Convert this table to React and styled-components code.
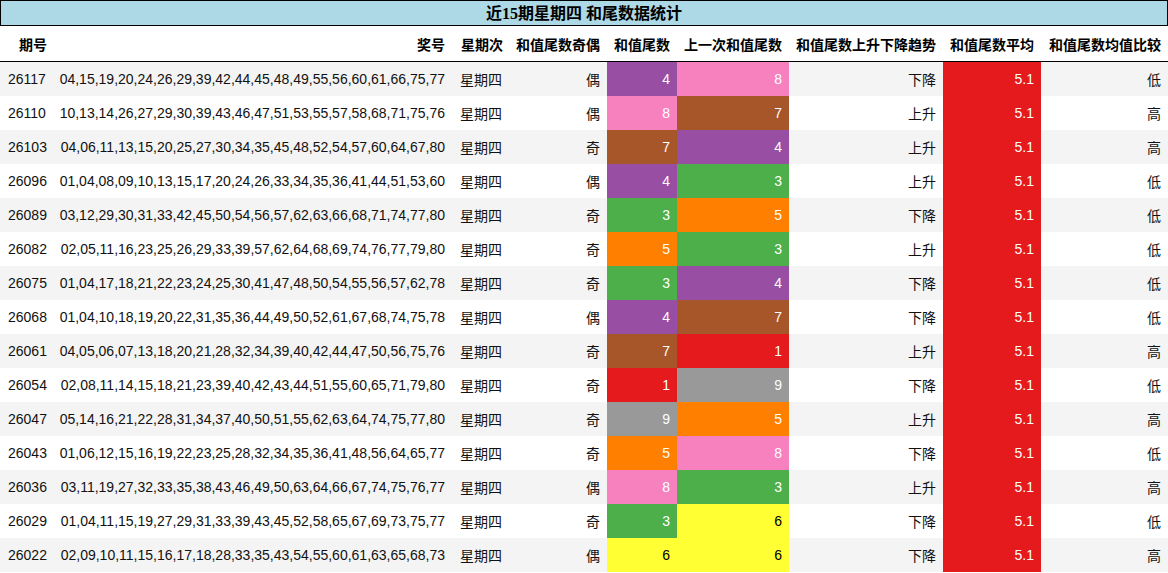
import React from "react";
import styled, { createGlobalStyle } from "styled-components";

const GlobalStyle = createGlobalStyle`
  body {
    margin: 0;
    background: #ffffff;
    font-family: "Liberation Sans", "Noto Sans CJK SC", sans-serif;
  }
`;

const colors = {
  1: "#e41a1c",
  3: "#4daf4a",
  4: "#984ea3",
  5: "#ff7f00",
  6: "#ffff33",
  7: "#a65628",
  8: "#f781bf",
  9: "#999999",
};

const rows = [
  ["26117", "04,15,19,20,24,26,29,39,42,44,45,48,49,55,56,60,61,66,75,77", "偶", 4, 8, "下降", "低"],
  ["26110", "10,13,14,26,27,29,30,39,43,46,47,51,53,55,57,58,68,71,75,76", "偶", 8, 7, "上升", "高"],
  ["26103", "04,06,11,13,15,20,25,27,30,34,35,45,48,52,54,57,60,64,67,80", "奇", 7, 4, "上升", "高"],
  ["26096", "01,04,08,09,10,13,15,17,20,24,26,33,34,35,36,41,44,51,53,60", "偶", 4, 3, "上升", "低"],
  ["26089", "03,12,29,30,31,33,42,45,50,54,56,57,62,63,66,68,71,74,77,80", "奇", 3, 5, "下降", "低"],
  ["26082", "02,05,11,16,23,25,26,29,33,39,57,62,64,68,69,74,76,77,79,80", "奇", 5, 3, "上升", "低"],
  ["26075", "01,04,17,18,21,22,23,24,25,30,41,47,48,50,54,55,56,57,62,78", "奇", 3, 4, "下降", "低"],
  ["26068", "01,04,10,18,19,20,22,31,35,36,44,49,50,52,61,67,68,74,75,78", "偶", 4, 7, "下降", "低"],
  ["26061", "04,05,06,07,13,18,20,21,28,32,34,39,40,42,44,47,50,56,75,76", "奇", 7, 1, "上升", "高"],
  ["26054", "02,08,11,14,15,18,21,23,39,40,42,43,44,51,55,60,65,71,79,80", "奇", 1, 9, "下降", "低"],
  ["26047", "05,14,16,21,22,28,31,34,37,40,50,51,55,62,63,64,74,75,77,80", "奇", 9, 5, "上升", "高"],
  ["26043", "01,06,12,15,16,19,22,23,25,28,32,34,35,36,41,48,56,64,65,77", "奇", 5, 8, "下降", "低"],
  ["26036", "03,11,19,27,32,33,35,38,43,46,49,50,63,64,66,67,74,75,76,77", "偶", 8, 3, "上升", "高"],
  ["26029", "01,04,11,15,19,27,29,31,33,39,43,45,52,58,65,67,69,73,75,77", "奇", 3, 6, "下降", "低"],
  ["26022", "02,09,10,11,15,16,17,18,28,33,35,43,54,55,60,61,63,65,68,73", "偶", 6, 6, "下降", "高"],
];

const headers = [
  "期号",
  "奖号",
  "星期次",
  "和值尾数奇偶",
  "和值尾数",
  "上一次和值尾数",
  "和值尾数上升下降趋势",
  "和值尾数平均",
  "和值尾数均值比较",
];

const widths = [54, 398, 58, 97, 70, 112, 154, 98, 127];

const Page = styled.div`
  width: 1168px;
`;

const Title = styled.div`
  height: 24px;
  border: 1px solid #000;
  background: #add8e6;
  font-family: "Liberation Serif", "Noto Sans CJK SC", serif;
  font-weight: bold;
  font-size: 16px;
  line-height: 25px;
  text-align: center;
  color: #000;
`;

const Table = styled.table`
  width: 1168px;
  table-layout: fixed;
  border-collapse: collapse;
  border-spacing: 0;
  font-size: 14px;
  color: #111;
`;

const HeadCell = styled.th`
  height: 35px;
  padding: 0 7px 0 0;
  text-align: right;
  font-weight: bold;
  font-size: 14px;
  color: #000;
  border-bottom: 1px solid #000;
  white-space: nowrap;
`;

const Row = styled.tr`
  height: 34px;
  background: ${(p) => (p.$shaded ? "#f4f4f4" : "#ffffff")};
`;

const Cell = styled.td`
  padding: ${(p) => (p.$left ? "0 0 0 8px" : "0 7px 0 0")};
  text-align: ${(p) => (p.$left ? "left" : "right")};
  white-space: nowrap;
  vertical-align: middle;
`;

const ColorCell = styled(Cell)`
  background: ${(p) => p.$bg};
  color: ${(p) => (p.$dark ? "#000" : "#fff")};
`;

const digitCell = (n) => (
  <ColorCell $bg={colors[n]} $dark={n === 6}>
    {n}
  </ColorCell>
);

export default function App() {
  return (
    <Page>
      <GlobalStyle />
      <Title>近15期星期四 和尾数据统计</Title>
      <Table>
        <colgroup>
          {widths.map((w, i) => (
            <col key={i} style={{ width: w }} />
          ))}
        </colgroup>
        <thead>
          <tr>
            {headers.map((h) => (
              <HeadCell key={h}>{h}</HeadCell>
            ))}
          </tr>
        </thead>
        <tbody>
          {rows.map((r, i) => (
            <Row key={r[0]} $shaded={i % 2 === 0}>
              <Cell $left>{r[0]}</Cell>
              <Cell>{r[1]}</Cell>
              <Cell $left>星期四</Cell>
              <Cell>{r[2]}</Cell>
              {digitCell(r[3])}
              {digitCell(r[4])}
              <Cell>{r[5]}</Cell>
              <ColorCell $bg="#e41a1c">5.1</ColorCell>
              <Cell>{r[6]}</Cell>
            </Row>
          ))}
        </tbody>
      </Table>
    </Page>
  );
}
